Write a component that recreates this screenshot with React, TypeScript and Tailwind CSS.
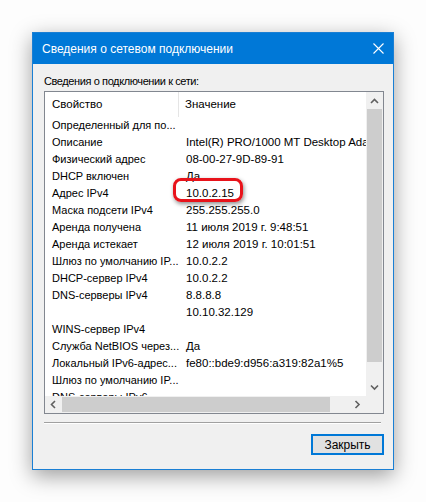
import React from 'react';

const rows: [string, string][] = [
  ['Определенный для по...', ''],
  ['Описание', 'Intel(R) PRO/1000 MT Desktop Adapter'],
  ['Физический адрес', '08-00-27-9D-89-91'],
  ['DHCP включен', 'Да'],
  ['Адрес IPv4', '10.0.2.15'],
  ['Маска подсети IPv4', '255.255.255.0'],
  ['Аренда получена', '11 июля 2019 г. 9:48:51'],
  ['Аренда истекает', '12 июля 2019 г. 10:01:51'],
  ['Шлюз по умолчанию IP...', '10.0.2.2'],
  ['DHCP-сервер IPv4', '10.0.2.2'],
  ['DNS-серверы IPv4', '8.8.8.8'],
  ['', '10.10.32.129'],
  ['WINS-сервер IPv4', ''],
  ['Служба NetBIOS через...', 'Да'],
  ['Локальный IPv6-адрес...', 'fe80::bde9:d956:a319:82a1%5'],
  ['Шлюз по умолчанию IP...', ''],
  ['DNS-серверы IPv6', ''],
];

const Chevron = ({ dir }: { dir: 'up' | 'down' | 'left' | 'right' }) => {
  const d = {
    up: 'M1 5 L4.5 1.5 L8 5',
    down: 'M1 1.5 L4.5 5 L8 1.5',
    left: 'M5 1 L1.5 4.5 L5 8',
    right: 'M1.5 1 L5 4.5 L1.5 8',
  }[dir];
  const horiz = dir === 'up' || dir === 'down';
  return (
    <svg width={horiz ? 9 : 7} height={horiz ? 7 : 9} viewBox={horiz ? '0 0 9 7' : '0 0 7 9'}>
      <path d={d} fill="none" stroke="#606060" strokeWidth="1.6" />
    </svg>
  );
};

const App: React.FC = () => {
  return (
    <div className="w-[426px] h-[502px] bg-[#fdfdfd] pt-[32px] pl-[32px] font-['Liberation_Sans',sans-serif]">
      <div className="w-[362px] h-[438px] border border-[#1a7fd4] bg-[#f0f0f0] flex flex-col shadow-[0_6px_20px_rgba(0,0,0,0.38)]">
        {/* title bar */}
        <div className="h-[31px] bg-[#0078d7] flex items-center justify-between pl-[9px] pr-[9px] text-white">
          <span className="text-[12px]">Сведения о сетевом подключении</span>
          <svg width="11" height="11" viewBox="0 0 11 11">
            <path d="M0.5 0.5 L10.5 10.5 M10.5 0.5 L0.5 10.5" stroke="white" strokeWidth="1.1" />
          </svg>
        </div>

        <div className="flex flex-col pl-[11px] pr-[9px]">
          <div className="pt-[10px] h-[27px] text-[11px] tracking-[-0.4px] text-black leading-[14px]">Сведения о подключении к сети:</div>

          {/* list view */}
          <div className="relative w-[340px] h-[323px] border border-[#828790] bg-white flex flex-col">
            <div className="flex flex-1 min-h-0">
              <div className="flex-1 min-w-0 flex flex-col overflow-hidden">
                {/* header */}
                <div className="h-[25px] shrink-0 flex items-center text-[11.5px] text-black">
                  <div className="w-[134px] h-full flex items-center pl-[7px] border-r border-[#e5e5e5]">Свойство</div>
                  <div className="pl-[6px]">Значение</div>
                </div>
                <div className="flex-1 overflow-hidden">
                  {rows.map(([k, v], i) => (
                    <div key={i} className="h-[17px] flex items-center text-[11px] text-black whitespace-nowrap">
                      <div className="w-[134px] shrink-0 pl-[7px] overflow-hidden">{k}</div>
                      <div className="pl-[7px] text-[11.5px]">{v}</div>
                    </div>
                  ))}
                </div>
              </div>
              {/* vertical scrollbar */}
              <div className="w-[17px] bg-[#f0f0f0] flex flex-col items-center">
                <div className="h-[17px] w-full flex items-center justify-center pt-[1px]">
                  <Chevron dir="up" />
                </div>
                <div className="w-[15px] h-[253px] bg-[#cdcdcd]" />
                <div className="flex-1" />
                <div className="h-[17px] w-full flex items-center justify-center">
                  <Chevron dir="down" />
                </div>
              </div>
            </div>
            {/* horizontal scrollbar */}
            <div className="h-[17px] shrink-0 bg-[#f0f0f0] flex items-center">
              <div className="w-[17px] h-full flex items-center justify-center">
                <Chevron dir="left" />
              </div>
              <div className="w-[268px] h-[15px] bg-[#cdcdcd]" />
              <div className="flex-1" />
              <div className="w-[17px] h-full flex items-center justify-center">
                <Chevron dir="right" />
              </div>
              <div className="w-[17px] h-full" />
            </div>

            {/* highlight */}
            <div className="absolute left-[128px] top-[86px] w-[70px] h-[24px] rounded-[8px] border-[3px] border-[#e8131b] shadow-[1px_2px_4px_rgba(0,0,0,0.45)]" />
          </div>

          {/* separator */}
          <div className="mt-[8px] w-[337px] h-[2px] border-t border-[#a0a0a0] border-b border-b-white" />

          <div className="flex justify-end mt-[10px]">
            <button className="w-[73px] h-[21px] border-2 border-[#0078d7] bg-[#e1e1e1] text-[12px] text-black flex items-center justify-center">
              Закрыть
            </button>
          </div>
        </div>
      </div>
    </div>
  );
};

export default App;
